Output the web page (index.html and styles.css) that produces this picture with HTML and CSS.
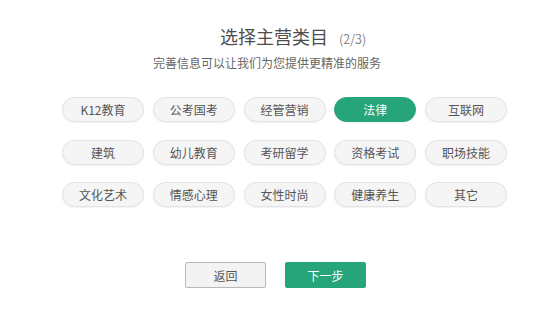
FILE: index.html
```html
<!DOCTYPE html>
<html lang="zh">
<head>
<meta charset="utf-8">
<link rel="stylesheet" href="styles.css">
</head>
<body>
<div class="page">
  <div class="title-row">
    <h1 class="title">选择主营类目</h1>
    <span class="step">(2/3)</span>
  </div>
  <p class="subtitle">完善信息可以让我们为您提供更精准的服务</p>
  <div class="grid">
    <div class="pill">K12教育</div>
    <div class="pill">公考国考</div>
    <div class="pill">经管营销</div>
    <div class="pill active">法律</div>
    <div class="pill">互联网</div>
    <div class="pill">建筑</div>
    <div class="pill">幼儿教育</div>
    <div class="pill">考研留学</div>
    <div class="pill">资格考试</div>
    <div class="pill">职场技能</div>
    <div class="pill">文化艺术</div>
    <div class="pill">情感心理</div>
    <div class="pill">女性时尚</div>
    <div class="pill">健康养生</div>
    <div class="pill">其它</div>
  </div>
  <div class="actions">
    <button class="btn btn-back">返回</button>
    <button class="btn btn-next">下一步</button>
  </div>
</div>
</body>
</html>
```
FILE: styles.css
```css
html, body {
  margin: 0;
  padding: 0;
  background: #ffffff;
}
.page {
  width: 548px;
  height: 312px;
  font-family: "Noto Sans CJK SC", "Noto Sans", sans-serif;
  color: #555;
  box-sizing: border-box;
  padding-top: 24px;
}
.title-row {
  display: flex;
  align-items: baseline;
  padding-left: 220px;
  height: 24px;
}
.title {
  margin: 0;
  font-size: 18px;
  font-weight: 400;
  color: #4d4d4d;
  line-height: 24px;
}
.step {
  margin-left: 11px;
  font-size: 12.5px;
  color: #8a8a8a;
}
.subtitle {
  margin: 7px 0 0 0;
  padding-left: 153px;
  font-size: 12px;
  line-height: 16px;
  color: #666;
}
.grid {
  margin: 26px 0 0 62px;
  display: grid;
  grid-template-columns: repeat(5, 82px);
  column-gap: 8.75px;
  row-gap: 17.5px;
}
.pill {
  height: 25px;
  box-sizing: border-box;
  border: 1px solid #e3e3e3;
  border-radius: 13px;
  background: #f5f5f5;
  box-shadow: 0 1px 2px rgba(0,0,0,0.06);
  font-size: 12px;
  color: #555;
  display: flex;
  align-items: center;
  justify-content: center;
}
.pill.active {
  background: #26a47a;
  border-color: #26a47a;
  color: #fff;
}
.actions {
  margin: 55px 0 0 185px;
  display: flex;
  gap: 19px;
}
.btn {
  width: 81px;
  height: 26px;
  box-sizing: border-box;
  border-radius: 2px;
  font-family: inherit;
  font-size: 12px;
  padding: 0;
  cursor: pointer;
}
.btn-back {
  background: #f3f3f3;
  border: 1px solid #b8b8b8;
  color: #555;
}
.btn-next {
  background: #26a47a;
  border: 1px solid #26a47a;
  color: #fff;
}
```
